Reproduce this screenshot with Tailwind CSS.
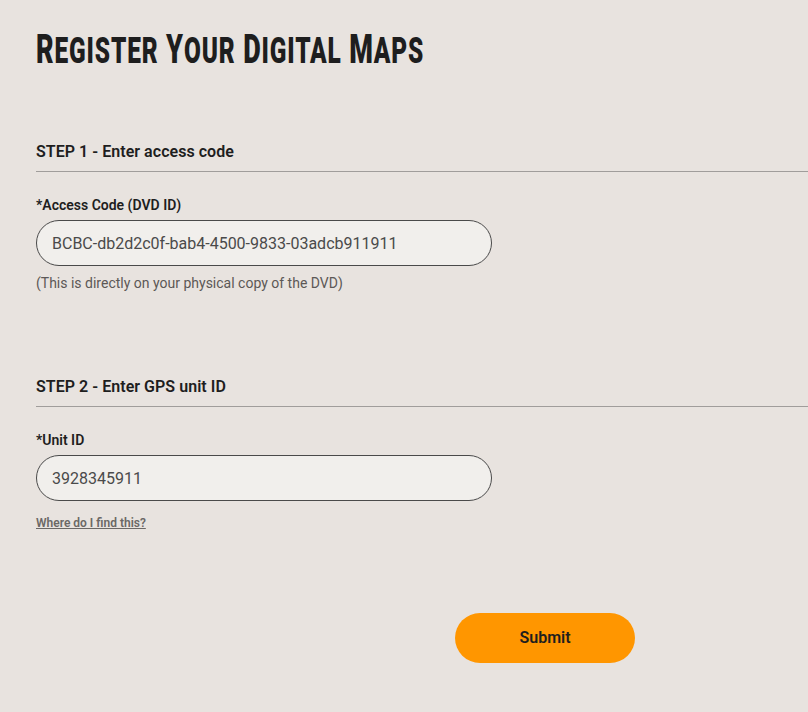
<!DOCTYPE html>
<html lang="en">
<head>
<meta charset="UTF-8" />
<title>Register Your Digital Maps</title>
<script src="https://cdn.jsdelivr.net/npm/@tailwindcss/browser@4"></script>
</head>
<body class="h-[712px] overflow-hidden bg-[#e8e3df] font-['Roboto',sans-serif] text-[#1e1e1e]">

<main class="pl-9">
    <!-- title -->
    <h1 class="h-[116px] pt-[24px] text-[41px] leading-[50px] font-black whitespace-nowrap tracking-[1.3px]">
        <span class="inline-block origin-left scale-x-[0.66] uppercase">R<span class="text-[37px]">egister</span> Y<span class="text-[37px]">our</span> D<span class="text-[37px]">igital</span> M<span class="text-[37px]">aps</span></span>
    </h1>

    <!-- step 1 -->
    <section class="h-[235px]">
        <h2 class="h-[56px] pt-[26px] border-b border-[#a09d9b] text-base leading-5 font-semibold tracking-[0.04px]">STEP 1 - Enter access code</h2>
        <label class="block mt-[24px] text-sm leading-[18px] font-semibold">*Access Code (DVD ID)</label>
        <input type="text" value="BCBC-db2d2c0f-bab4-4500-9833-03adcb911911" class="block mt-[6px] w-[456px] h-[46px] px-[15px] rounded-[23px] border border-[#4a4a4a] bg-[#f1efec] text-base text-[#4a4a4a] outline-none" />
        <p class="mt-[8px] text-sm leading-[18px] text-[#5c5856]">(This is directly on your physical copy of the DVD)</p>
    </section>

    <!-- step 2 -->
    <section>
        <h2 class="h-[56px] pt-[26px] border-b border-[#a09d9b] text-base leading-5 font-semibold tracking-[0.04px]">STEP 2 - Enter GPS unit ID</h2>
        <label class="block mt-[24px] text-sm leading-[18px] font-semibold">*Unit ID</label>
        <input type="text" value="3928345911" class="block mt-[6px] w-[456px] h-[46px] px-[15px] rounded-[23px] border border-[#4a4a4a] bg-[#f1efec] text-base text-[#4a4a4a] outline-none" />
        <a href="#" class="inline-block mt-[14px] text-xs leading-4 font-semibold text-[#6b6866] underline">Where do I find this?</a>
    </section>

    <div class="mt-[79px] pl-[419px]">
        <button type="button" class="w-[180px] h-[50px] rounded-[25px] bg-[#ff9600] text-base font-semibold text-[#1e1e1e]">Submit</button>
    </div>
</main>

</body>
</html>
